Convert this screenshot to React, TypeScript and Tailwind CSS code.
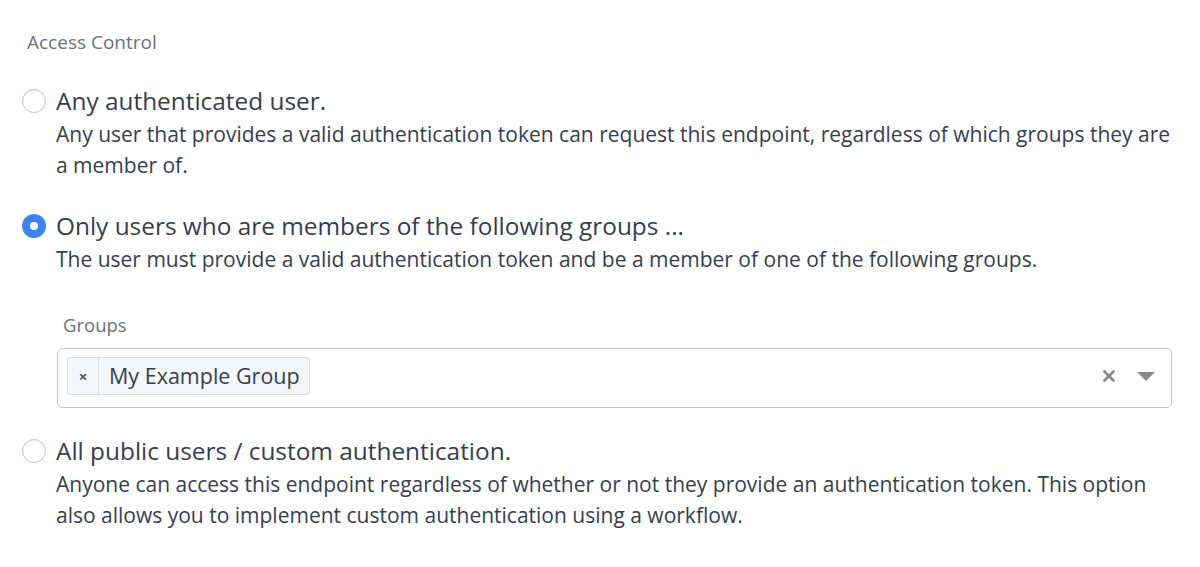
import React, { useState } from 'react';

interface OptionProps {
  checked: boolean;
  title: string;
  description: string;
  onSelect: () => void;
  className?: string;
  children?: React.ReactNode;
}

function Radio({ checked }: { checked: boolean }) {
  if (checked) {
    return (
      <span className="flex h-[24px] w-[24px] shrink-0 items-center justify-center rounded-full bg-[#3d84f5]">
        <span className="h-[8px] w-[8px] rounded-full bg-white" />
      </span>
    );
  }
  return (
    <span className="h-[24px] w-[24px] shrink-0 rounded-full border-[1.5px] border-[#c4c4c4] bg-white shadow-[inset_0_1px_2px_rgba(0,0,0,0.08)]" />
  );
}

function Option({ checked, title, description, onSelect, className = '', children }: OptionProps) {
  return (
    <div className={className}>
      <button type="button" onClick={onSelect} className="flex items-center gap-[10px] text-left">
        <Radio checked={checked} />
        <span className="text-[24.4px] leading-[32px] text-[#363e4e]">{title}</span>
      </button>
      <p className="mt-[2px] pl-[34px] text-[21px] leading-[31px] text-[#363e4e]">{description}</p>
      {children}
    </div>
  );
}

export default function App() {
  const [selected, setSelected] = useState('groups');

  return (
    <div className="min-h-screen bg-white px-[22px] pt-[28px] font-['Open_Sans',sans-serif]">
      <h2 className="pl-[5px] text-[19px] leading-[28px] text-[#6d717a]">Access Control</h2>

      <Option
        className="mt-[29px]"
        checked={selected === 'any'}
        onSelect={() => setSelected('any')}
        title="Any authenticated user."
        description="Any user that provides a valid authentication token can request this endpoint, regardless of which groups they are a member of."
      />

      <Option
        className="mt-[29px]"
        checked={selected === 'groups'}
        onSelect={() => setSelected('groups')}
        title="Only users who are members of the following groups ..."
        description="The user must provide a valid authentication token and be a member of one of the following groups."
      >
        {/* Groups select */}
        <div className="mt-[36px] pl-[35px] pr-[6px]">
          <label className="block pl-[6px] text-[18.5px] leading-[28px] text-[#6d717a]">Groups</label>
          <div className="mt-[9px] flex h-[60px] items-center rounded-[5px] border border-[#c9c9c9] bg-white pb-[4px] pl-[9px] pr-[16px]">
            <div className="flex h-[38px] items-stretch rounded-[3px] border border-[#d9dde3] bg-[#f4f6f9]">
              <span className="flex w-[31px] items-center justify-center border-r border-[#d9dde3] text-[15px] font-bold text-[#4a5262]">
                ×
              </span>
              <span className="flex items-center pl-[10px] pr-[9px] text-[21.5px] text-[#363e4e]">My Example Group</span>
            </div>
            <div className="flex-1" />
            <svg width="12" height="12" viewBox="0 0 12 12" className="mr-[22px]">
              <path d="M1.5 1.5 L10.5 10.5 M10.5 1.5 L1.5 10.5" stroke="#8a8a8a" strokeWidth="2.6" strokeLinecap="round" />
            </svg>
            <svg width="18" height="9" viewBox="0 0 18 9">
              <path d="M0 0 L18 0 L9 9 Z" fill="#8a8a8a" />
            </svg>
          </div>
        </div>
      </Option>

      <Option
        className="mt-[27px]"
        checked={selected === 'public'}
        onSelect={() => setSelected('public')}
        title="All public users / custom authentication."
        description="Anyone can access this endpoint regardless of whether or not they provide an authentication token. This option also allows you to implement custom authentication using a workflow."
      />
    </div>
  );
}
